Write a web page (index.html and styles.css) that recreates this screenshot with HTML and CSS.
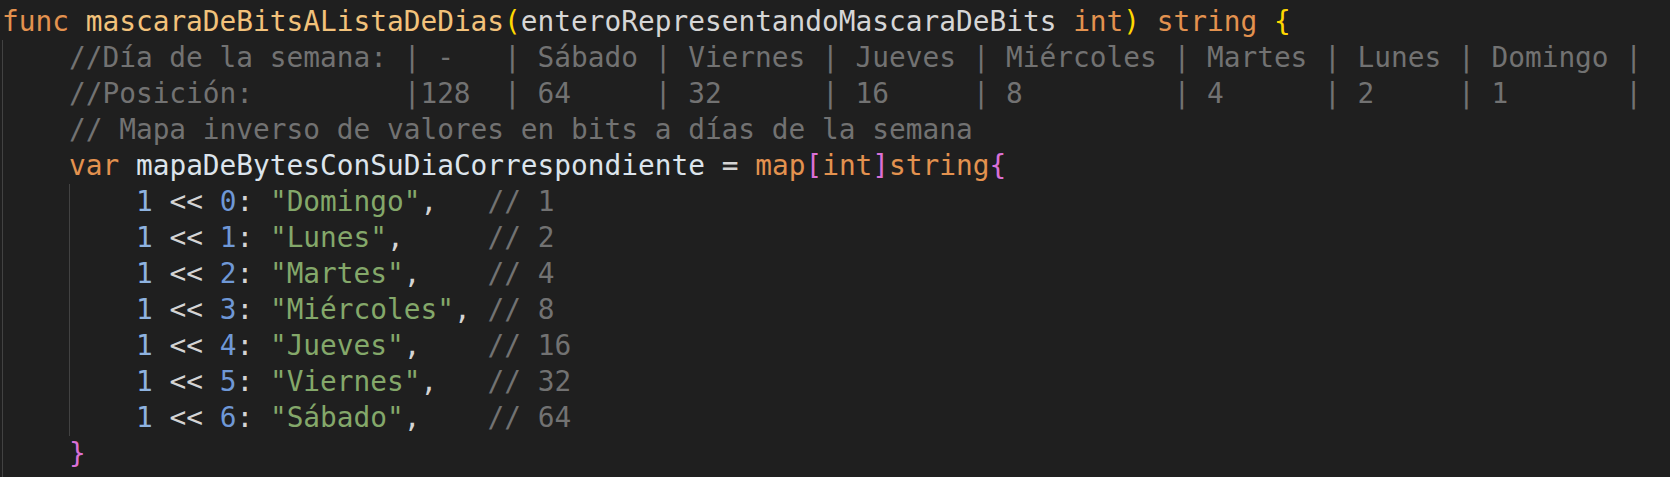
FILE: index.html
```html
<!DOCTYPE html>
<html lang="es">

<head>
    <meta charset="UTF-8">
    <meta name="viewport" content="width=device-width, initial-scale=1.0">
    <title>mascaraDeBitsAListaDeDias</title>
    <link rel="stylesheet" href="styles.css">
</head>

<body>
    <div class="editor">
        <div class="line"><span class="kw">func</span> <span class="fn">mascaraDeBitsAListaDeDias</span><span class="b1">(</span><span class="pa">enteroRepresentandoMascaraDeBits</span> <span class="kw">int</span><span class="b1">)</span> <span class="kw">string</span> <span class="b1">{</span></div>
        <div class="line"><span class="ig">    </span><span class="cm">//Día de la semana: | -   | Sábado | Viernes | Jueves | Miércoles | Martes | Lunes | Domingo |</span></div>
        <div class="line"><span class="ig">    </span><span class="cm">//Posición:         |128  | 64     | 32      | 16     | 8         | 4      | 2     | 1       |</span></div>
        <div class="line"><span class="ig">    </span><span class="cm">// Mapa inverso de valores en bits a días de la semana</span></div>
        <div class="line"><span class="ig">    </span><span class="kw">var</span> <span class="vr">mapaDeBytesConSuDiaCorrespondiente</span> <span class="op">=</span> <span class="kw">map</span><span class="b2">[</span><span class="kw">int</span><span class="b2">]</span><span class="kw">string</span><span class="b2">{</span></div>
        <div class="line"><span class="ig">    </span><span class="ig">    </span><span class="nu">1</span> <span class="op">&lt;&lt;</span> <span class="n2">0</span><span class="op">:</span> <span class="st">"Domingo"</span><span class="op">,</span>   <span class="cm">// 1</span></div>
        <div class="line"><span class="ig">    </span><span class="ig">    </span><span class="nu">1</span> <span class="op">&lt;&lt;</span> <span class="n2">1</span><span class="op">:</span> <span class="st">"Lunes"</span><span class="op">,</span>     <span class="cm">// 2</span></div>
        <div class="line"><span class="ig">    </span><span class="ig">    </span><span class="nu">1</span> <span class="op">&lt;&lt;</span> <span class="n2">2</span><span class="op">:</span> <span class="st">"Martes"</span><span class="op">,</span>    <span class="cm">// 4</span></div>
        <div class="line"><span class="ig">    </span><span class="ig">    </span><span class="nu">1</span> <span class="op">&lt;&lt;</span> <span class="n2">3</span><span class="op">:</span> <span class="st">"Miércoles"</span><span class="op">,</span> <span class="cm">// 8</span></div>
        <div class="line"><span class="ig">    </span><span class="ig">    </span><span class="nu">1</span> <span class="op">&lt;&lt;</span> <span class="n2">4</span><span class="op">:</span> <span class="st">"Jueves"</span><span class="op">,</span>    <span class="cm">// 16</span></div>
        <div class="line"><span class="ig">    </span><span class="ig">    </span><span class="nu">1</span> <span class="op">&lt;&lt;</span> <span class="n2">5</span><span class="op">:</span> <span class="st">"Viernes"</span><span class="op">,</span>   <span class="cm">// 32</span></div>
        <div class="line"><span class="ig">    </span><span class="ig">    </span><span class="nu">1</span> <span class="op">&lt;&lt;</span> <span class="n2">6</span><span class="op">:</span> <span class="st">"Sábado"</span><span class="op">,</span>    <span class="cm">// 64</span></div>
        <div class="line"><span class="ig">    </span><span class="b2">}</span></div>
        <div class="line"><span class="ig">    </span><span class="kw">var</span> <span class="vr">dias</span> <span class="b2">[]</span><span class="kw">string</span></div>
    </div>
</body>

</html>
```

FILE: styles.css
```css
/* reset */
html,
body {
    width: 100%;
    height: 100%;
    margin: 0;
    padding: 0;
    overflow: hidden;
}

body {
    background-color: #1f1f1f;
}

/* editor */
.editor {
    padding: 4px 0 0 2px;
    font-family: 'DejaVu Sans Mono', 'Liberation Mono', monospace;
    font-size: 27.8px;
    color: #d4d4d4;
}

.editor .line {
    height: 36px;
    line-height: 36px;
    white-space: pre;
}

/* indent guide */
.ig {
    display: inline-block;
    box-shadow: inset 1px 0 0 #424242;
}

/* syntax colours */
.kw {
    color: #e3924f;
}

.fn {
    color: #f2c27b;
}

.pa {
    color: #d6d6d6;
}

.vr {
    color: #dce4ec;
}

.op {
    color: #d4d4d4;
}

.cm {
    color: #727272;
}

.nu {
    color: #8fb3e0;
}

.n2 {
    color: #6f98d6;
}

.st {
    color: #84a86a;
}

.b1 {
    color: #ffd700;
}

.b2 {
    color: #da70d6;
}
```
